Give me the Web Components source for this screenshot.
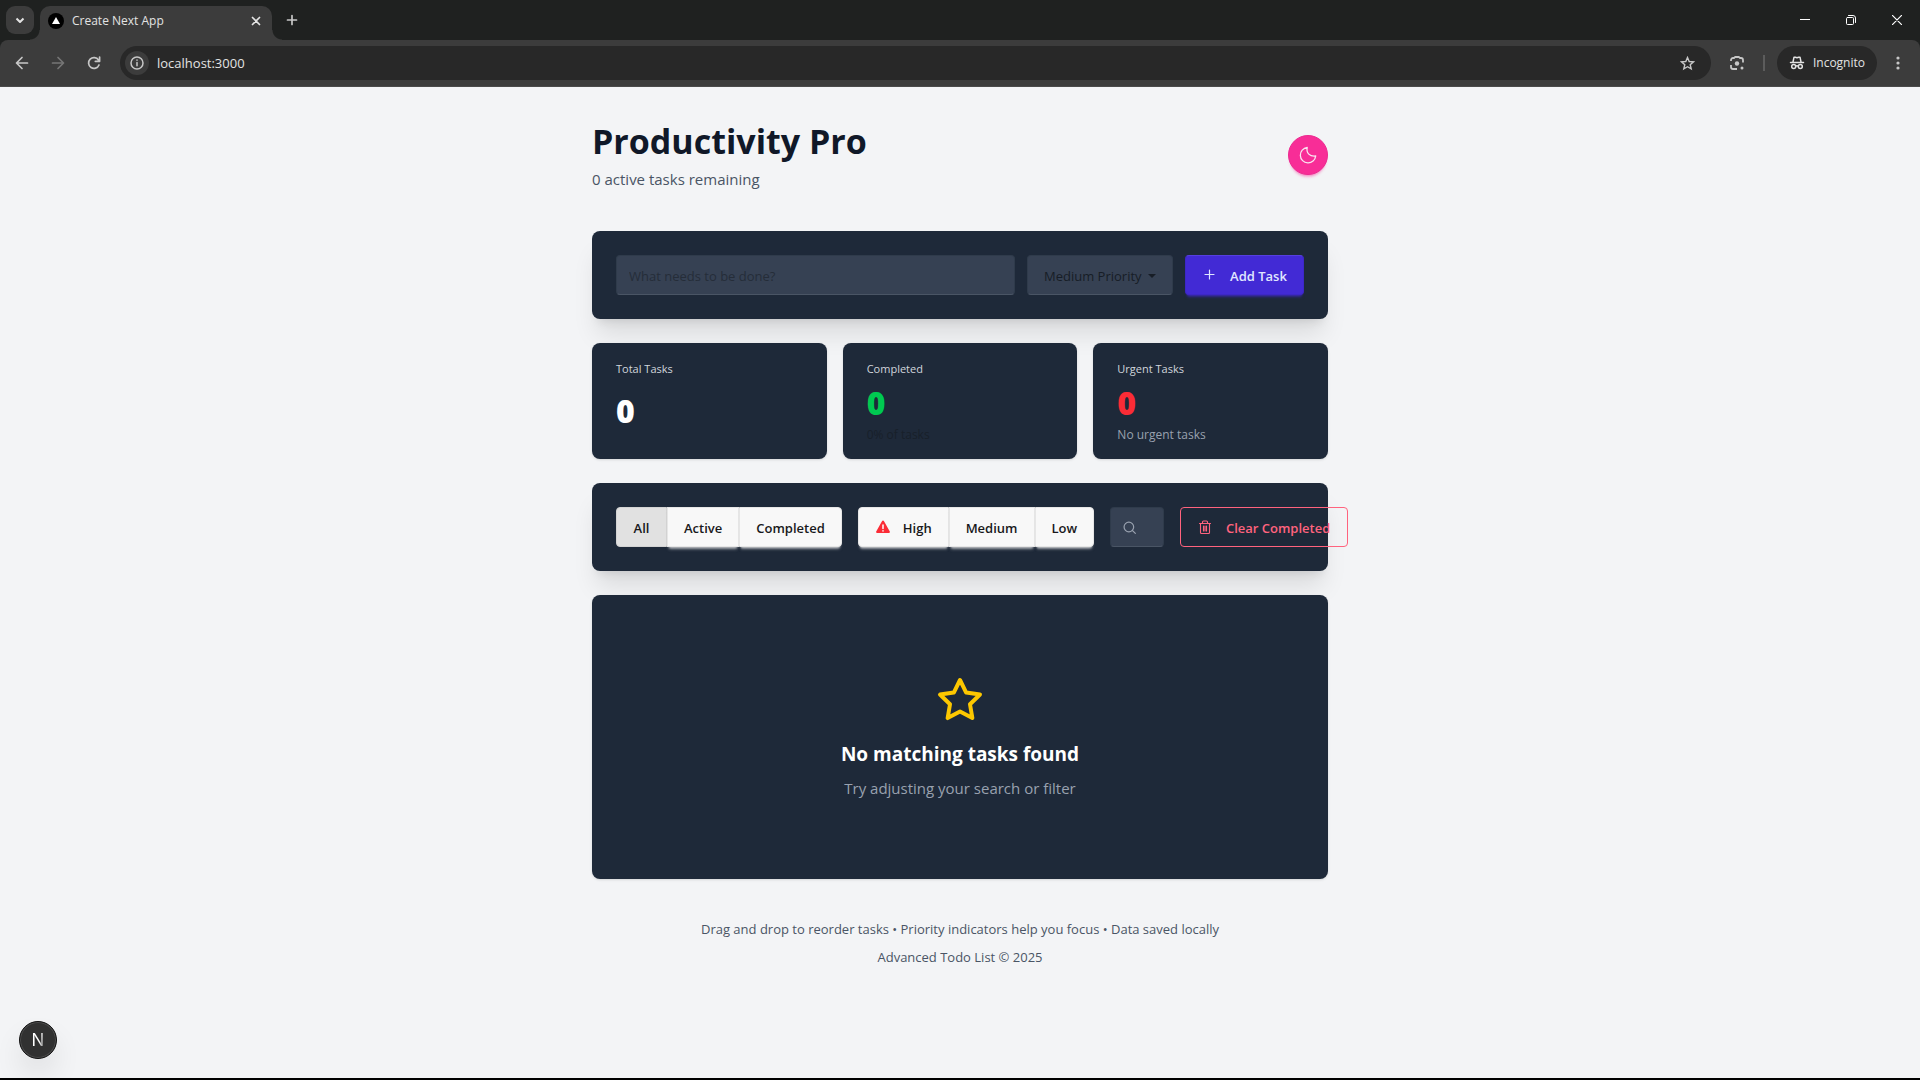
<!DOCTYPE html>
<html lang="en">
<head>
<meta charset="utf-8">
<title>Create Next App</title>
<style>
html,body{margin:0;height:100%}
body{font-family:"Open Sans","Noto Sans",sans-serif;font-size:16px;line-height:24px;background:#f3f4f6;color:#1d232a}
</style>
</head>
<body>
<app-window></app-window>
<script>
const BASE = `<style>
:host{fill:none;stroke:currentColor;stroke-linecap:round;stroke-linejoin:round}
*,*::before,*::after{box-sizing:border-box}
button,input,select{font:inherit;color:inherit;margin:0}
button{border:0;background:none;padding:0;display:flex;align-items:center;justify-content:center;cursor:pointer}
h1,h2,p{margin:0}
svg{display:block;flex:none}
</style>`;
const define = (name, html) => {
  const template = document.createElement('template');
  template.innerHTML = BASE + html;
  customElements.define(name, class extends HTMLElement {
    constructor() {
      super();
      this.attachShadow({mode: 'open'}).append(template.content.cloneNode(true));
    }
  });
};

define('tab-strip', `<style>
:host{display:flex;height:40px;background:#1f2120;color:#e3e3e3;align-items:stretch;font-size:12px;line-height:16px}
.menu{width:28px;height:28px;border-radius:9px;background:#3c3c3c;margin:6px 6px 0;align-self:flex-start}
.tab{position:relative;display:flex;align-items:center;gap:8px;width:232px;margin-top:6px;height:34px;border-radius:10px 10px 0 0;background:#3c3c3c;padding:0 8px 4px}
.tab::before,.tab::after{content:"";position:absolute;bottom:0;width:10px;height:10px}
.tab::before{left:-10px;background:radial-gradient(circle at 0 0,transparent 9px,#3c3c3c 10px)}
.tab::after{right:-10px;background:radial-gradient(circle at 100% 0,transparent 9px,#3c3c3c 10px)}
.title{flex:1}
.close{width:16px;height:16px}
.new{width:28px;height:28px;margin:6px 0 0 6px;color:#c7c7c7}
.win{margin-left:auto;display:flex;color:#fff}
.win button{width:46px}
</style>
<button class="menu" aria-label="Search tabs"><svg width="10" height="10" viewBox="0 0 10 10" stroke-width="2" stroke-linecap="butt"><path d="M1.500 3.500 5 7l3.500-3.500"/></svg></button>
<div class="tab">
<svg width="16" height="16" viewBox="0 0 16 16" stroke="none"><circle cx="8" cy="8" r="8" fill="#000"/><path d="M8 4 12 11H4Z" fill="#fff"/></svg>
<span class="title">Create Next App</span>
<button class="close" aria-label="Close tab"><svg width="10" height="10" viewBox="0 0 10 10" stroke-width="1.700"><path d="M1.500 1.500l7 7M8.500 1.500l-7 7"/></svg></button>
</div>
<button class="new" aria-label="New tab"><svg width="12" height="12" viewBox="0 0 12 12" stroke-width="1.700"><path d="M6 1.500v9M1.500 6h9"/></svg></button>
<div class="win">
<button aria-label="Minimize"><svg width="10" height="10" viewBox="0 0 10 10" stroke-linecap="butt"><path d="M0 4.500h10"/></svg></button>
<button aria-label="Restore"><svg width="10" height="10" viewBox="0 0 10 10"><rect x=".5" y="2.500" width="7" height="7" rx="1"/><path d="M2.500.5H7A2.500 2.500 0 0 1 9.500 3v4.500"/></svg></button>
<button aria-label="Close"><svg width="10" height="10" viewBox="0 0 10 10" stroke-width="1.200"><path d="M0 0l10 10M10 0 0 10"/></svg></button>
</div>`);

define('tool-bar', `<style>
:host{display:block;background:#1f2120}
.bar{display:flex;align-items:center;height:47px;padding:0 8px;background:#3c3c3c;border-radius:8px 8px 0 0;border-bottom:1px solid #4a4a4a;color:#c7c7c7;font-size:13px;line-height:20px}
.nav{width:28px;height:28px;margin-right:8px}
.off{color:#757575}
.box{flex:1;display:flex;align-items:center;height:34px;border-radius:17px;background:#282828;padding:0 16px 0 5px;margin:0 12px 0 4px}
.info{width:24px;height:24px;border-radius:50%;background:#3c3c3c;margin-right:8px}
input{flex:1;min-width:0;border:0;outline:0;background:none;color:#e3e3e3;padding:0}
.lens{width:28px;height:28px}
hr{width:2px;height:16px;border:0;background:#5c5c5c;margin:0 12px}
.incog{height:34px;border-radius:17px;background:#282828;color:#e3e3e3;font-size:12px;line-height:16px;padding:0 12px;gap:8px}
.more{width:28px;height:28px;margin-left:7px}
</style>
<div class="bar">
<button class="nav" aria-label="Back"><svg width="14" height="14" viewBox="0 0 14 14" stroke-width="1.700"><path d="M12.500 7H2M7 1.500 1.500 7 7 12.500"/></svg></button>
<button class="nav off" aria-label="Forward"><svg width="14" height="14" viewBox="0 0 14 14" stroke-width="1.700"><path d="M1.500 7H12M7 1.500 12.500 7 7 12.500"/></svg></button>
<button class="nav" aria-label="Reload"><svg width="14" height="14" viewBox="0 0 14 14" stroke-width="1.700"><path d="M12 9A5.400 5.400 0 1 1 11.500 4L12.500 5M12.600 1v4.300H8.300"/></svg></button>
<div class="box">
<button class="info" aria-label="Site information"><svg width="14" height="14" viewBox="0 0 14 14" stroke-width="1.500"><circle cx="7" cy="7" r="6"/><path d="M7 6.500v3.300M7 4.100v.2"/></svg></button>
<input aria-label="Address" value="localhost:3000">
<svg width="15" height="15" viewBox="0 0 15 15" stroke-width="1.400" stroke-linejoin="miter"><path d="M7.500 1.500 9.200 5.500 13.500 5.900 10.200 8.700 11.200 12.900 7.500 10.700 3.800 12.900 4.800 8.700 1.500 5.900 5.800 5.500Z"/></svg>
</div>
<button class="lens" aria-label="Search with Lens"><svg width="16" height="16" viewBox="0 0 16 16" stroke-width="1.800" stroke-linecap="butt"><path d="M2 6V5a2 2 0 0 1 2-2h1.200L6 2h4l.8 1H12a2 2 0 0 1 2 2v2.500M2 10v2a2 2 0 0 0 2 2h4"/><circle cx="8" cy="8.500" r="2.200" fill="currentColor" stroke="none"/><circle cx="13" cy="13" r="1.500" fill="currentColor" stroke="none"/></svg></button>
<hr>
<button class="incog"><svg width="16" height="16" viewBox="0 0 16 16" stroke-width="1.500"><path d="M1.500 7.500h13M4 7 5 2.200h1.300L8 2.700l1.700-.5H11L12 7"/><circle cx="4.700" cy="11.500" r="2"/><circle cx="11.300" cy="11.500" r="2"/><path d="M6.700 11.200q1.300-.8 2.600 0"/></svg>Incognito</button>
<button class="more" aria-label="More"><svg width="4" height="14" viewBox="0 0 4 14" stroke="none"><g fill="currentColor"><circle cx="2" cy="2" r="1.600"/><circle cx="2" cy="7" r="1.600"/><circle cx="2" cy="12" r="1.600"/></g></svg></button>
</div>`);

define('page-header', `<style>
:host{display:flex;align-items:center;justify-content:space-between;margin-bottom:40px}
h1{font-size:34px;line-height:44px;font-weight:700;color:#101828;margin-bottom:4px}
p{color:#4a5565;font-size:15px;line-height:24px}
button{width:40px;height:40px;border-radius:50%;background:#f82d97;border:1px solid #ec2a90;color:#f9e4f0;box-shadow:0 3px 2px -2px #f82d974d,0 4px 3px -2px #f82d974d}
</style>
<div><h1>Productivity Pro</h1><p>0 active tasks remaining</p></div>
<button aria-label="Toggle theme"><svg width="20" height="20" viewBox="0 0 20 20" stroke-width="1.300"><path d="M9.200 2.500A7.700 7.700 0 1 0 17.700 11C11.800 11.800 8 8 9.200 2.500Z"/></svg></button>`);

define('panel-card', `<style>
:host{display:block;background:#1e2939;border-radius:8px;padding:24px;margin-bottom:24px;box-shadow:0 20px 25px -5px #0000001a,0 8px 10px -6px #0000001a}
:host([flat]){box-shadow:0 1px 3px #0000001a,0 1px 2px -1px #0000001a}
</style><slot></slot>`);

define('task-form', `<style>
:host{display:block}
form{display:flex;gap:12px;font-size:13px;line-height:20px}
input,select{height:40px;border:1px solid #2f3b4b;border-bottom-color:#4a5565;border-radius:4px;background:#364153}
input{flex:1;min-width:0;padding:2px 12px 0}
input::placeholder{color:#252d39;opacity:1}
.pick{position:relative;width:146px}
select{appearance:none;width:100%;padding:2px 24px 0 16px;color:#171d26}
.pick::after{content:"";position:absolute;right:17px;top:19px;border:4px solid transparent;border-top-color:#171d26;border-bottom:0}
button{width:119px;height:40px;padding-top:2px;gap:12px;border-radius:4px;background:#422ad5;border:1px solid #3d27c7;border-top-color:#563fe0;color:#e0e7ff;font-weight:600;box-shadow:0 3px 2px -2px #422ad580,0 4px 3px -2px #422ad580}
</style>
<form><input aria-label="New task" placeholder="What needs to be done?">
<div class="pick"><select aria-label="Priority"><option>High Priority</option><option selected>Medium Priority</option><option>Low Priority</option></select></div>
<button type="button"><svg width="16" height="16" viewBox="0 0 16 16" stroke-width="1.200"><path d="M7.500 2v9M3 6.500h9"/></svg>Add Task</button></form>`);

define('stat-card', `<style>
:host{display:flex;flex-direction:column;flex:1;height:116px;box-sizing:border-box;padding:16px 24px;border-radius:8px;background:#1e2939;box-shadow:0 1px 3px #0000001a,0 1px 2px -1px #0000001a;font-size:12px;line-height:16px;color:var(--desc,#99a1af)}
.label{font-size:11px;line-height:20px;color:#d1d5dc}
.value{flex:1;display:flex;align-items:center;font-size:32px;font-weight:800;line-height:32px;color:var(--value,#fff)}
</style><div class="label"><slot name="label"></slot></div><div class="value"><slot name="value"></slot></div><slot></slot>`);

define('stat-row', `<style>:host{display:flex;gap:16px;margin-bottom:24px}</style><slot></slot>`);

define('filter-button', `<style>
:host{display:block}
button{height:40px;min-width:51px;padding:2px 16px 0;gap:12px;background:#f8f8f8;border:1px solid #e6e6e6;color:#18181b;font-size:13px;line-height:20px;font-weight:600;border-radius:var(--radius,0);box-shadow:0 3px 2px -2px #f8f8f880,0 4px 3px -2px #f8f8f880;white-space:nowrap}
:host([active]) button{background:#e1e1e1;border-color:#d3d3d3;box-shadow:none}
:host(:first-child){--radius:4px 0 0 4px}
:host(:last-child){--radius:0 4px 4px 0}
</style><button><slot name="icon"></slot><slot></slot></button>`);

define('button-group', `<style>:host{display:flex;flex:none}</style><slot></slot>`);

define('search-field', `<style>
:host{display:block;flex:none;width:54px}
label{display:flex;align-items:center;height:40px;border:1px solid #2f3b4b;border-bottom-color:#4a5565;border-radius:4px;background:#364153;padding:2px 11px 0;gap:8px;color:#99a1af}
input{flex:1;min-width:0;width:0;border:0;outline:0;background:none;padding:0}
</style><label><svg width="16" height="16" viewBox="0 0 24 24" stroke-width="1.800"><path d="m20 20-4.500-4.500M17.500 10.500a7.200 7.200 0 1 1-14.400 0 7.200 7.200 0 0 1 14.400 0Z"/></svg><input type="text" aria-label="Search tasks"></label>`);

define('clear-button', `<style>
:host{display:block;flex:none}
button{height:40px;width:168px;gap:14px;border:1px solid #ff637e;border-radius:4px;color:#ff637e;font-size:13px;line-height:20px;font-weight:600;padding-top:2px;white-space:nowrap}
</style><button><svg width="14" height="16" viewBox="0 0 14 16" stroke-width="1.100"><path d="M1.500 3.500h11M4.500 3.500V2a1 1 0 0 1 1-1h3a1 1 0 0 1 1 1v1.500M2.500 3.500v9a1 1 0 0 0 1 1h7a1 1 0 0 0 1-1v-9M5.500 6v5M7 6v5M8.500 6v5"/></svg>Clear Completed</button>`);

define('filter-bar', `<style>:host{display:flex;gap:16px}</style>
<button-group><filter-button active>All</filter-button><filter-button>Active</filter-button><filter-button>Completed</filter-button></button-group>
<button-group><filter-button><svg slot="icon" width="16" height="16" viewBox="0 0 16 16" stroke="none"><path d="M7.100 1a1 1 0 0 1 1.800 0l5.900 10.500a1 1 0 0 1-.9 1.500H2.100a1 1 0 0 1-.9-1.500Z" fill="#fb2c36"/><path d="M8 5v3.500M8 10.800v.2" stroke="#fff" stroke-width="1.500"/></svg>High</filter-button><filter-button>Medium</filter-button><filter-button>Low</filter-button></button-group>
<search-field></search-field>
<clear-button></clear-button>`);

define('empty-state', `<style>
:host{display:flex;flex-direction:column;align-items:center;padding:57px 0 55px}
svg{color:#fdc700;margin-bottom:16px}
h2{font-size:19px;line-height:28px;font-weight:700;color:#fff;margin-bottom:8px}
p{font-size:15px;line-height:24px;color:#99a1af}
</style><svg width="48" height="48" viewBox="0 0 24 24" stroke-width="2"><path d="m12 2 3.090 6.260L22 9.270l-5 4.870 1.180 6.880L12 17.770l-6.180 3.250L7 14.140 2 9.270l6.910-1.010Z"/></svg>
<h2>No matching tasks found</h2><p>Try adjusting your search or filter</p>`);

define('page-footer', `<style>
:host{display:flex;flex-direction:column;align-items:center;gap:8px;margin-top:40px;font-size:13px;line-height:20px;color:#4a5565}
</style><p>Drag and drop to reorder tasks • Priority indicators help you focus • Data saved locally</p><p>Advanced Todo List © 2025</p>`);

define('dev-badge', `<style>
:host{position:fixed;left:19px;bottom:21px}
button{width:38px;height:38px;border-radius:50%;background:#313131;border:1px solid #111;box-shadow:inset 0 0 0 1px #4c4c4c,0 16px 32px -8px #0000003d;font-family:Inter,sans-serif;font-size:17px;line-height:20px}
span{color:transparent;background:linear-gradient(100deg,#fff 60%,#888 90%);background-clip:text}
</style><button aria-label="Open Next.js Dev Tools"><span>N</span></button>`);

define('todo-page', `<style>
:host{display:block;flex:1;background:#f3f4f6}
main{max-width:768px;margin:0 auto;padding:32px 16px}
</style>
<main>
<page-header></page-header>
<panel-card><task-form></task-form></panel-card>
<stat-row>
<stat-card><span slot="label">Total Tasks</span><span slot="value">0</span></stat-card>
<stat-card style="--value:#00c951;--desc:#18202a"><span slot="label">Completed</span><span slot="value">0</span>0% of tasks</stat-card>
<stat-card style="--value:#fb2c36"><span slot="label">Urgent Tasks</span><span slot="value">0</span>No urgent tasks</stat-card>
</stat-row>
<panel-card><filter-bar></filter-bar></panel-card>
<panel-card flat><empty-state></empty-state></panel-card>
<page-footer></page-footer>
</main>
<dev-badge></dev-badge>`);

define('app-window', `<style>
:host{display:flex;flex-direction:column;min-height:100vh;border-bottom:2px solid #000;box-sizing:border-box}
</style><tab-strip></tab-strip><tool-bar></tool-bar><todo-page></todo-page>`);
</script>
</body>
</html>
